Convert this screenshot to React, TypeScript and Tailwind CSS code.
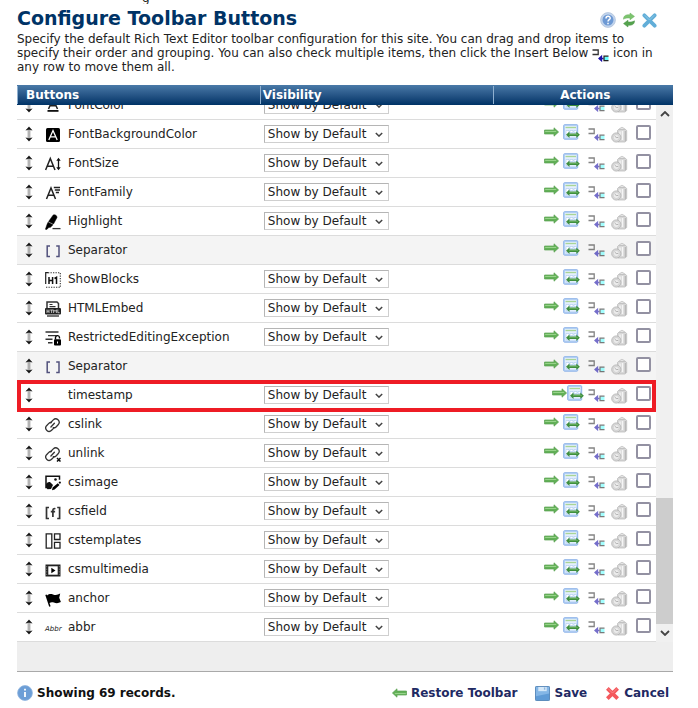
import React from "react";

type ToolbarItem = { name: string; icon?: string; separator?: boolean; highlighted?: boolean };

const items: ToolbarItem[] = [
  { name: "FontColor", icon: "fontColor" },
  { name: "FontBackgroundColor", icon: "fontBackground" },
  { name: "FontSize", icon: "fontSize" },
  { name: "FontFamily", icon: "fontFamily" },
  { name: "Highlight", icon: "highlight" },
  { name: "Separator", icon: "separator", separator: true },
  { name: "ShowBlocks", icon: "showBlocks" },
  { name: "HTMLEmbed", icon: "htmlEmbed" },
  { name: "RestrictedEditingException", icon: "restricted" },
  { name: "Separator", icon: "separator", separator: true },
  { name: "timestamp", highlighted: true },
  { name: "cslink", icon: "link" },
  { name: "unlink", icon: "unlink" },
  { name: "csimage", icon: "image" },
  { name: "csfield", icon: "field" },
  { name: "cstemplates", icon: "templates" },
  { name: "csmultimedia", icon: "multimedia" },
  { name: "anchor", icon: "anchor" },
  { name: "abbr", icon: "abbr" },
];

const chain = (
  <g fill="none" stroke="#333" strokeWidth="1.3" strokeLinecap="round">
    <path d="M5.8 5.500 8.300 2.900a3.400 3.400 0 0 1 5 4.600L11.300 9.700a3.200 3.200 0 0 1-3 1" />
    <path d="M9 10.900 6.600 13.300a3.400 3.400 0 0 1-5-4.600L3.800 6.400A3.200 3.200 0 0 1 6.300 5.500" />
    <path d="m5.900 10 3.500-3.800" />
  </g>
);

const glyphs: Record<string, React.ReactNode> = {
  fontColor: (
    <>
      <path d="M3.500 12 8 2l4.500 10M5.200 8.800h5.600" fill="none" stroke="#222" strokeWidth="1.500" />
      <path d="M2.500 13h11v1.800h-11z" fill="#111" />
    </>
  ),
  fontBackground: (
    <>
      <rect x="1" y="1" width="14" height="14" rx="1.500" fill="#000" />
      <path d="M3.800 13 8 3.500l4.200 9.500M5.500 9.800h5" fill="none" stroke="#fff" strokeWidth="1.300" />
    </>
  ),
  fontSize: (
    <>
      <path d="M.6 14 5.300 2.500 10 14M2.200 10.300h6.200" fill="none" stroke="#222" strokeWidth="1.500" />
      <path d="M13.500 3.500v9" stroke="#111" strokeWidth="1.300" />
      <path d="M11.300 4.800 13.500 1.800l2.200 3zM11.300 11.200l2.200 3 2.200-3z" fill="#111" />
    </>
  ),
  fontFamily: (
    <>
      <path d="M1.500 14 6 3l4.500 11M3 10.200h6" fill="none" stroke="#222" strokeWidth="1.500" />
      <path d="M8.800 2.500H15M9.800 5H15M10.800 7.500H14" stroke="#222" strokeWidth="1.300" />
    </>
  ),
  highlight: (
    <>
      <path d="M8 1.200C9.500 0 12.300 1.500 12 3.500L8.500 10 3.600 7.500zM3 8.200l5 2.600-2.500 2.400-1.700.2L1.800 15.500.4 15.300 2 10.500z" fill="#000" stroke="#000" strokeWidth=".5" />
      <path d="M7.500 14.600H15.500" stroke="#333" strokeWidth="1.300" />
    </>
  ),
  separator: (
    <path d="M5 3H2.200v10.500H5M11.200 3H14v10.500h-2.800" fill="none" stroke="#51517c" strokeWidth="1.500" />
  ),
  showBlocks: (
    <>
      <path d="M.7 12V.7h2.600" fill="none" stroke="#222" strokeWidth="1.200" />
      <path d="M3 .8h12.500M15.300 1v14M1 15.200h14.500" fill="none" stroke="#333" strokeWidth="1.100" strokeDasharray="1.300 1.200" />
      <path d="M4 5v7M7.600 5v7M4 8.500h3.600M9.500 6.500l2-1.200V12" fill="none" stroke="#111" strokeWidth="1.500" />
    </>
  ),
  htmlEmbed: (
    <>
      <path d="M2 8V1h10l1.500 1.500V8" fill="none" stroke="#333" strokeWidth="1.500" />
      <path d="M4.500 3.500h3M4.500 5.700h6" stroke="#333" strokeWidth="1.200" />
      <rect x="0" y="7" width="16" height="6.500" rx="1" fill="#222" />
      <path d="M2 8.500V12M4 8.500V12M2 10.200h2M5.200 9H8M6.600 9v3M8.600 12V8.800l1.400 1.600 1.400-1.600V12M12.800 8.500v3.200h1.800" fill="none" stroke="#ddd" strokeWidth=".8" />
      <path d="M2 15h12" stroke="#444" strokeWidth="1.500" />
    </>
  ),
  restricted: (
    <>
      <path d="M.5 2h13M3 5.600h8.500M.5 9.200h7M3 12.800h4.500" stroke="#333" strokeWidth="1.400" />
      <rect x="9" y="9.300" width="7" height="6.200" rx="1" fill="#000" />
      <path d="M10.500 9.500V7.800a2 2 0 0 1 4-.3v1" fill="none" stroke="#000" strokeWidth="1.400" />
      <path d="M12.500 11.500v2" stroke="#fff" />
    </>
  ),
  link: chain,
  unlink: (
    <>
      {chain}
      <path d="m12 12 3.500 3.500m0-3.500L12 15.500" stroke="#111" strokeWidth="1.500" />
    </>
  ),
  image: (
    <>
      <path d="M3.500 12.500H1V1.200h13.500v3.500" fill="none" stroke="#111" strokeWidth="1.500" />
      <path d="M1 12V9.500C1.500 7.500 4 6.500 5.500 7.500L8 10l-2 4-3.500.3z" fill="#111" />
      <circle cx="10.500" cy="4.500" r="1.300" fill="#111" />
      <path d="m7 15.300.6-2.800 5.200-4.300 1.700 1.800L9.600 14.600zM13.500 7.500 15 6.200l1 1.300-1 1.500z" fill="#000" />
    </>
  ),
  field: (
    <path d="M4 3.500H1.500v11H4M12.200 3.500h2.400v11h-2.400M10.400 4.700C8.600 4.200 7.900 5 7.900 6.500V13M5.800 7.700h4.300" fill="none" stroke="#333" strokeWidth="1.700" />
  ),
  templates: (
    <path d="M1.200.8h5.600v14.400H1.200zM9.500.8H15V6.500H9.500zM9.500 9.300H15v5.900H9.500z" fill="none" stroke="#222" strokeWidth="1.300" />
  ),
  multimedia: (
    <>
      <path d="M.5 2.500h15v12H.5z" fill="#222" />
      <path d="M3.300 4.300h9.400v8.400H3.300z" fill="#fff" />
      <path d="M1.700 4v9M14.300 4v9" stroke="#999" strokeWidth=".7" strokeDasharray="1.300 1.300" />
      <path d="m6.300 5.700 4.200 2.800-4.200 2.800z" fill="#000" />
    </>
  ),
  anchor: (
    <path d="m.3 4 1.300-.5.5 1C4 2.800 6 2.800 8 3.500c2.500.9 4.700.6 7.200-.9l-1 4.200 1.700 4.200c-2.600 1.500-4.800 1.300-7 .6-1.700-.5-3.100-.4-4.400.4l1.100 3.300-1.400.4z" fill="#000" />
  ),
};

const ItemIcon = ({ icon }: { icon?: string }) => {
  if (icon === "abbr") {
    return <span className="w-4 pt-1 text-[7px] text-[#222] italic">Abbr</span>;
  }
  return (
    <svg viewBox="0 0 16 16" className="mt-px size-4 shrink-0">
      {icon ? glyphs[icon] : null}
    </svg>
  );
};

const DragHandle = () => (
  <svg viewBox="0 0 8 16" className="h-4 w-2 shrink-0">
    <path d="M3.200 3v10M4.800 3v10" stroke="#777" strokeWidth=".8" />
    <path d="M.8 4.300 4 .8l3.200 3.500L4 3.400zM.8 11.700 4 15.200l3.200-3.500L4 12.600z" fill="#111" stroke="#111" strokeWidth=".3" />
  </svg>
);

const Arrow = ({ left }: { left?: boolean }) => (
  <svg viewBox="0 0 15 10" className={left ? "h-2.5 w-[15px] rotate-180" : "h-2.5 w-[15px]"}>
    <path d="M.5 3h9.500V.8L14.600 5 10 9.200V7H.5z" fill="#62b057" stroke="#5aa052" strokeWidth=".7" />
    <path d="M1.200 4.400h11" stroke="#a5db97" strokeWidth=".9" />
  </svg>
);

const InsertTemplate = () => (
  <svg viewBox="0 0 17 17" className="size-[17px]">
    <rect x=".7" y=".7" width="14" height="14.500" rx=".8" fill="#b9d4f7" stroke="#8db3e8" />
    <path d="M2 2h11.500v11.500H2z" fill="#e3effc" />
    <path d="M2.500 3.500h10.500" stroke="#a9d595" strokeWidth="1.300" />
    <path d="M3 6.500h3v6H3zM7 6.500h3v2H7zM11 6.500h2.500v2H11z" fill="#fff" stroke="#a9c8f0" strokeWidth=".6" />
    <path d="m3 10.700 3.500-3.200v1.900h6.800V7.500l3.600 3.200-3.600 3.200V12H6.500v1.900z" fill="#3f8f3e" />
    <path d="M6 10.500h9" stroke="#6fb565" strokeWidth=".7" />
  </svg>
);

const InsertBelow = ({ faded }: { faded?: boolean }) => (
  <svg viewBox="0 0 17 14" className={faded ? "h-3.5 w-[17px] opacity-60" : "h-3.5 w-[17px]"}>
    <path d="M.5 2h5.700v4.500H.5" fill="none" stroke="#333" strokeWidth="1.300" />
    <path d="M8 10.500h3.500M9.500 8.300 7 10.500l2.500 2.200z" fill="#1a0fa8" stroke="#1a0fa8" strokeWidth="1.300" />
    <path d="M12 8.500h4.500v4H12z" fill="#6ff" />
    <path d="M16.500 8.200H12v4.500h4.500" fill="none" stroke="#222" strokeWidth="1.200" />
  </svg>
);

const Trash = () => (
  <svg viewBox="0 0 17 17" className="size-[17px]">
    <path d="M6.500 4.500 8 3h6l1.700 1.500v10L14 16H7z" fill="#d8d8d8" stroke="#b5b5b5" strokeWidth=".7" />
    <path d="M8.500 3.500C9 .7 13 .7 13.500 3.500z" fill="#e4e4e4" stroke="#bdbdbd" strokeWidth=".8" />
    <path d="M9 5.500v8M11.500 5v9" stroke="#f5f5f5" strokeWidth="1.400" />
    <path d="M14.300 5v10" stroke="#b0b0b0" />
    <circle cx="5.300" cy="11.500" r="4.600" fill="#dadada" stroke="#b0b0b0" strokeWidth=".8" />
    <circle cx="5.300" cy="11.500" r="3" fill="#ececec" stroke="#c8c8c8" strokeWidth=".6" />
    <path d="m3.800 10.200 1.500 1.300h2" fill="none" stroke="#999" strokeWidth=".7" />
  </svg>
);

const Chevron = ({ up, className }: { up?: boolean; className: string }) => (
  <svg viewBox="0 0 10 6" className={className}>
    <path d={up ? "m1 5 4-4 4 4" : "m1 1 4 4 4-4"} fill="none" stroke="#444" strokeWidth="1.800" />
  </svg>
);

const RoundIcon = ({ info }: { info?: boolean }) => (
  <svg viewBox="0 0 16 16" className="size-4">
    <circle cx="8" cy="8" r="7.400" fill={info ? "#6c9ed6" : "#c3d5ed"} stroke={info ? "#8db2de" : "#b0c2da"} strokeWidth=".8" />
    {info ? (
      <path d="M8 3.800v1.700M8 7v5" stroke="#fff" strokeWidth="1.800" />
    ) : (
      <>
        <circle cx="8" cy="8" r="5.500" fill="#6d99d4" />
        <path d="M6 6.500c0-3 4.200-2.800 4.200-.3C10.200 7.700 8 7.700 8 9.500M8 10.700v1.500" fill="none" stroke="#fff" strokeWidth="1.500" />
      </>
    )}
  </svg>
);

const Refresh = () => (
  <svg viewBox="0 0 14 16" className="h-4 w-3.5">
    <path d="M1.500 7.200C1.500 3.500 4 2.500 8 2.700V1l4.500 3.400L8 7.800V6C5 5.900 3.500 6 1.500 7.200z" fill="#7cc46e" stroke="#6bb060" strokeWidth=".5" />
    <path d="M12.500 8.800c0 3.700-2.500 4.700-6.500 4.500V15l-4.500-3.400L6 8.200V10c3 .1 4.500 0 6.500-1.200z" fill="#55a34e" stroke="#4a9446" strokeWidth=".5" />
  </svg>
);

const Cross = ({ red }: { red?: boolean }) => (
  <svg viewBox="0 0 16 16" className="size-[15px]">
    <path d="M2.500 2.500l11 11M13.500 2.500l-11 11" stroke={red ? "#f4585c" : "#62aed8"} strokeWidth="4" strokeLinecap={red ? "butt" : "round"} />
    <path d="M3 2.500l5 5 5-5" fill="none" stroke={red ? "#fa8a8c" : "#8fcae6"} strokeWidth="1" />
  </svg>
);

const Disk = () => (
  <svg viewBox="0 0 16 16" className="size-[15px]">
    <rect x=".5" y=".5" width="15" height="15" rx=".8" fill="#5f9bd6" stroke="#5585b8" />
    <path d="M1 1h14v7L1 11z" fill="#84b6e6" />
    <path d="M3.500 1h9v4.500h-9z" fill="#d5e8f8" />
    <path d="M9.500 1.500H11v2.500H9.500z" fill="#8db5dc" />
  </svg>
);

const Row = ({ item }: { item: ToolbarItem }) => (
  <tr className={"relative h-[29px] border-b border-[#dcdcdc] " + (item.separator ? "bg-[#f4f4f4]" : "bg-white")}>
    <td className="p-0">
      {item.highlighted && (
        <span className="pointer-events-none absolute inset-x-0 -top-px -bottom-[3px] z-10 border-4 border-[#ee1c25]" />
      )}
      <div className="flex items-center pl-2">
        <DragHandle />
        <div className="ml-3 flex w-[22px] shrink-0 justify-start">
          <ItemIcon icon={item.icon} />
        </div>
        <span className="ml-px">{item.name}</span>
      </div>
    </td>
    <td className="p-0">
      {!item.separator && (
        <div className="relative ml-1 w-[125px]">
          <select
            aria-label={`${item.name} visibility`}
            className="block h-[18px] w-full appearance-none border border-[#cfcfcf] border-t-[#b5b5b5] border-l-[#b5b5b5] bg-white pl-[3px] text-[12px] leading-4"
          >
            <option>Show by Default</option>
          </select>
          <Chevron className="pointer-events-none absolute top-[7px] right-1.5 h-[5px] w-2" />
        </div>
      )}
    </td>
    <td className="p-0">
      <div className="flex items-center justify-end pr-[5px]">
        <button aria-label="Move" className={item.highlighted ? "pb-1" : "mr-1 pb-1"}>
          <Arrow />
        </button>
        <button aria-label="Insert template" className={item.highlighted ? "mr-1 pb-1" : "mr-2 pb-1"}>
          <InsertTemplate />
        </button>
        <button aria-label="Insert below" className="mr-1.5">
          <InsertBelow faded />
        </button>
        <button aria-label="Delete" className="mr-2">
          <Trash />
        </button>
        <input
          type="checkbox"
          aria-label={`Select ${item.name}`}
          className="mb-1 size-[15px] appearance-none rounded-xs border-2 border-[#9391a2] bg-white"
        />
      </div>
    </td>
  </tr>
);

const App = () => {
  return (
    <main className="bg-white pr-[25px] pl-[17px] font-['DejaVu_Sans',sans-serif] text-[12px] text-[#222]">
      <div className="flex h-1 items-end overflow-hidden pl-[125px] leading-3">g</div>
      <header className="flex items-center justify-between pt-0.5 pb-0.5">
        <h1 className="text-[19px] leading-6 font-bold text-[#003366]">Configure Toolbar Buttons</h1>
        <div className="flex gap-1.5 pt-1 pr-4">
          <button aria-label="Help">
            <RoundIcon />
          </button>
          <button aria-label="Refresh">
            <Refresh />
          </button>
          <button aria-label="Close">
            <Cross />
          </button>
        </div>
      </header>
      <p className="pr-2 leading-[14px]">
        Specify the default Rich Text Editor toolbar configuration for this site. You can drag and drop items to specify
        their order and grouping. You can also check multiple items, then click the Insert Below{" "}
        <span className="inline-block h-3 align-middle">
          <InsertBelow />
        </span>{" "}
        icon in any row to move them all.
      </p>

      <div className="mt-[11px] flex h-5 items-center bg-linear-to-b from-[#4a7aa8] to-[#003366] font-bold text-white">
        <div className="w-[37%] border-l border-[#8fb0d0] pl-2">Buttons</div>
        <div className="flex-1 border-l border-[#8fb0d0] pl-0.5">Visibility</div>
        <div className="w-[27.500%] border-l border-[#8fb0d0] pl-1 text-center">Actions</div>
      </div>

      <div className="flex h-[537px] bg-[#f0f0f0]">
        <div className="flex flex-1 flex-col justify-end overflow-hidden">
          <table className="w-full table-fixed border-collapse">
            <colgroup>
              <col className="w-[38%]" />
              <col className="w-[35%]" />
              <col className="w-[27%]" />
            </colgroup>
            <tbody>
              {items.map((item, i) => (
                <Row key={i} item={item} />
              ))}
            </tbody>
          </table>
        </div>
        <div className="flex w-[17px] flex-col items-center">
          <Chevron up className="my-1.5 h-1.5 w-2.5" />
          <div className="flex-1" />
          <div className="h-[126px] w-full bg-[#cdcdcd]" />
          <Chevron className="my-1.5 h-1.5 w-2.5" />
        </div>
      </div>
      <div className="h-[30px] border-b border-[#a9a9a9] bg-[#eee]" />

      <footer className="flex items-center justify-between pt-3 pr-1 pb-2 font-bold">
        <div className="flex items-center gap-1 text-[#111]">
          <RoundIcon info />
          Showing 69 records.
        </div>
        <div className="flex items-center gap-[18px] text-[#1f2a63]">
          <button className="flex items-center gap-1">
            <Arrow left />
            Restore Toolbar
          </button>
          <button className="flex items-center gap-1">
            <Disk />
            Save
          </button>
          <button className="flex items-center gap-1">
            <Cross red />
            Cancel
          </button>
        </div>
      </footer>
    </main>
  );
};

export default App;
